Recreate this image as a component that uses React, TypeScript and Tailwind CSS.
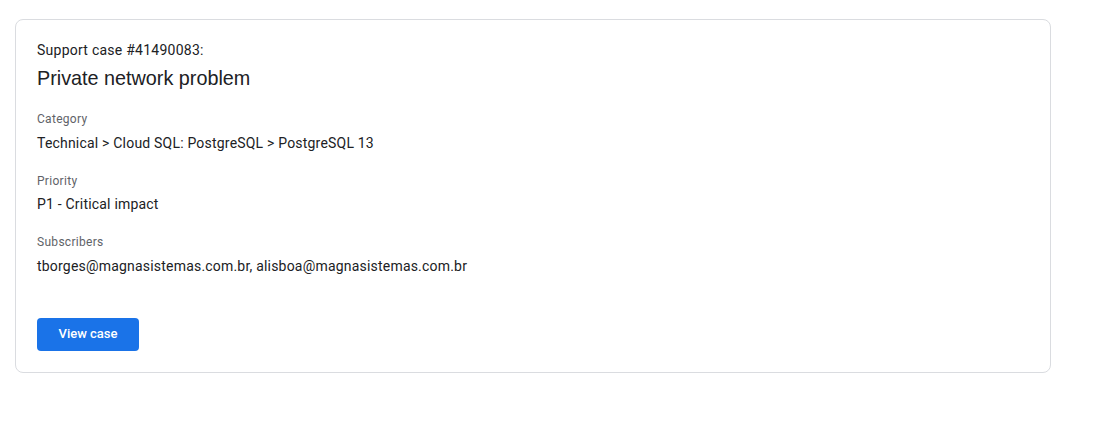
import React from 'react'

const fields = [
  { label: 'Category', value: 'Technical > Cloud SQL: PostgreSQL > PostgreSQL 13' },
  { label: 'Priority', value: 'P1 - Critical impact' },
  { label: 'Subscribers', value: 'tborges@magnasistemas.com.br, alisboa@magnasistemas.com.br' },
]

export default function App() {
  return (
    <div className="min-h-[446px] bg-white pl-[15px] pt-[19px] font-['Roboto',sans-serif] text-[#202124]">
      <div className="w-[1036px] rounded-lg border border-[#dadce0] px-[21px] pt-5 pb-[21px]">
        <div className="text-sm leading-5 tracking-[0.25px]">Support case #41490083:</div>
        <h1 className="mt-1 font-['Liberation_Sans',Arial,sans-serif] text-[19.8px] leading-7">
          Private network problem
        </h1>
        <div className="mt-[19px] flex flex-col gap-5">
          {fields.map((f) => (
            <div key={f.label}>
              <div className="text-xs leading-4 tracking-[0.3px] text-[#5f6368]">{f.label}</div>
              <div className="mt-[5.5px] text-sm leading-5 tracking-[0.2px]">{f.value}</div>
            </div>
          ))}
        </div>
        <button className="mt-[42px] h-[33px] w-[102px] rounded bg-[#1a73e8] text-[13px] font-medium text-white">
          View case
        </button>
      </div>
    </div>
  )
}
